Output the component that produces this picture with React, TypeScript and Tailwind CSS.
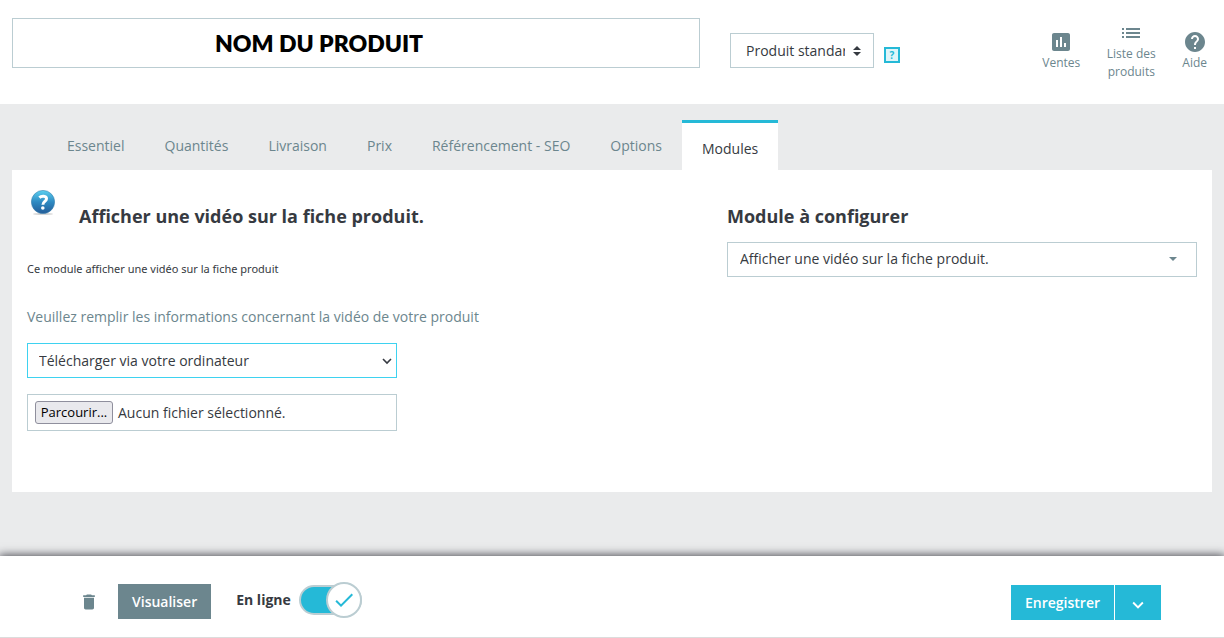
import { ReactNode, useState } from "react";
import {
  MdAssessment,
  MdCheck,
  MdDelete,
  MdHelp,
  MdKeyboardArrowDown,
  MdList,
} from "react-icons/md";

const tabs = [
  "Essentiel",
  "Quantités",
  "Livraison",
  "Prix",
  "Référencement - SEO",
  "Options",
  "Modules",
];

function HeaderLink({
  icon,
  className,
  children,
}: {
  icon: ReactNode;
  className?: string;
  children: ReactNode;
}) {
  return (
    <a
      href="#"
      className={`flex flex-col items-center text-center text-xs leading-[18px] text-[#6c868e] ${className ?? ""}`}
    >
      {icon}
      {children}
    </a>
  );
}

function HelpBall() {
  return (
    <svg width="26" height="26" viewBox="0 0 26 26" className="shrink-0" aria-hidden="true">
      <defs>
        <linearGradient id="ball" x1="0" y1="0" x2="0" y2="1">
          <stop offset="0" stopColor="#5ad0f0" />
          <stop offset="0.5" stopColor="#2f8ac2" />
          <stop offset="1" stopColor="#245c98" />
        </linearGradient>
      </defs>
      <ellipse cx="12" cy="24" rx="10" ry="1" fill="#d5d5d5" />
      <circle cx="12" cy="12" r="11.6" fill="url(#ball)" stroke="#3a82ae" strokeWidth="0.6" />
      <path
        d="M8.4 7.6 C10.2 5.8 15.6 5.6 15.5 8.8 C15.4 11.5 11.8 11.3 11.9 14.8"
        fill="none"
        stroke="#fff"
        strokeWidth="3"
      />
      <circle cx="11.8" cy="18" r="1.8" fill="#fff" />
    </svg>
  );
}

function Header() {
  return (
    <header className="flex h-[104px] bg-white pl-3">
      <div className="min-w-0 flex-1 pt-[18px]">
        <input
          type="text"
          aria-label="Nom du produit"
          defaultValue="NOM DU PRODUIT"
          className="h-[50px] w-full border border-[#bbcdd2] pl-[202px] font-[Lato,sans-serif] text-[23px] font-extrabold text-black outline-none"
        />
      </div>
      <div className="flex w-[524px] shrink-0 items-start pl-[30px]">
        <div className="relative mt-[33px] w-36">
          <select
            aria-label="Type de produit"
            className="h-[35px] w-full appearance-none border border-[#bbcdd2] bg-white pr-7 pl-[15px] text-sm outline-none"
          >
            <option>Produit standard</option>
            <option>Pack de produits</option>
            <option>Produit dématérialisé</option>
          </select>
          <svg
            width="8"
            height="10"
            viewBox="0 0 8 10"
            className="pointer-events-none absolute top-[13px] right-[13px]"
            aria-hidden="true"
          >
            <path d="M4 0 L8 4 H0 Z M0 6 H8 L4 10 Z" fill="#363a41" />
          </svg>
        </div>
        <button
          type="button"
          className="mt-[47px] ml-2.5 flex size-4 items-center justify-center border-2 border-[#25b9d7] bg-[#dff5f9] text-[10px] leading-none font-bold text-[#25b9d7]"
        >
          ?
        </button>
        <nav className="mt-[21px] mr-[17px] ml-auto flex items-center gap-[26px]">
          <HeaderLink icon={<MdAssessment size={24} />}>Ventes</HeaderLink>
          <HeaderLink icon={<MdList size={24} />} className="w-[50px]">
            Liste des produits
          </HeaderLink>
          <HeaderLink icon={<MdHelp size={24} />}>Aide</HeaderLink>
        </nav>
      </div>
    </header>
  );
}

function VideoForm() {
  const [fileName, setFileName] = useState("Aucun fichier sélectionné.");

  return (
    <section className="col-span-7 px-[15px]">
      <div className="flex items-start pt-5 pl-1">
        <HelpBall />
        <h2 className="mt-3.5 ml-[22px] text-lg leading-6 font-bold">
          Afficher une vidéo sur la fiche produit.
        </h2>
      </div>
      <p className="mt-[33px] font-['Noto_Sans',sans-serif] text-[11px] leading-4">
        Ce module afficher une vidéo sur la fiche produit
      </p>
      <label htmlFor="source" className="mt-[30px] block text-sm text-[#6c868e]">
        Veuillez remplir les informations concernant la vidéo de votre produit
      </label>
      <div className="relative mt-4 max-w-[370px]">
        <select
          id="source"
          className="h-[35px] w-full appearance-none border border-[#3ed2f0] bg-white px-[11px] text-sm outline-none"
        >
          <option>Télécharger via votre ordinateur</option>
          <option>Lien YouTube</option>
        </select>
        <svg
          width="10"
          height="7"
          viewBox="0 0 10 7"
          className="pointer-events-none absolute top-[15px] right-[5px]"
          aria-hidden="true"
        >
          <path d="M1 1 L5 5 L9 1" fill="none" stroke="#363a41" strokeWidth="1.6" />
        </svg>
      </div>
      <label className="relative mt-4 flex h-[37px] max-w-[370px] items-center border border-[#bbcdd2] px-[7px] text-sm">
        <input
          type="file"
          className="sr-only"
          onChange={(e) => {
            setFileName(e.target.files?.[0]?.name ?? "Aucun fichier sélectionné.");
          }}
        />
        <span className="flex h-[23px] w-[78px] items-center justify-center rounded-[3px] border border-[#8f8f9d] bg-[#e9e9ed] text-[13px] text-black">
          Parcourir...
        </span>
        <span className="ml-[5px]">{fileName}</span>
      </label>
    </section>
  );
}

function ModulePicker() {
  return (
    <section className="col-span-5 px-[15px] pt-[34px]">
      <h2 className="text-lg leading-6 font-bold">
        <label htmlFor="module">Module à configurer</label>
      </h2>
      <div className="relative mt-3.5">
        <select
          id="module"
          className="h-[35px] w-full appearance-none border border-[#bbcdd2] bg-white px-3 pb-px text-sm outline-none"
        >
          <option>Afficher une vidéo sur la fiche produit.</option>
        </select>
        <svg
          width="8"
          height="4"
          viewBox="0 0 8 4"
          className="pointer-events-none absolute top-[15px] right-5"
          aria-hidden="true"
        >
          <path d="M0 0 H8 L4 4 Z" fill="#6c868e" />
        </svg>
      </div>
    </section>
  );
}

function Footer() {
  const [online, setOnline] = useState(true);

  return (
    <footer className="relative flex items-start border-b border-[#dcdcdc] bg-white pt-7 pr-[63px] pb-[17px] pl-[79px] text-sm font-semibold shadow-[0_0_9px_1px_#4a4a52]">
      <button type="button" aria-label="Supprimer" className="flex h-[35px] items-center text-[#6c868e]">
        <MdDelete size={20} />
      </button>
      <button type="button" className="ml-[19px] h-[35px] bg-[#6c868e] px-3.5 text-white">
        Visualiser
      </button>
      <label className="ml-[25px] flex h-8 items-center font-bold">
        En ligne
        <input
          type="checkbox"
          checked={online}
          onChange={() => {
            setOnline(!online);
          }}
          className="sr-only"
        />
        <span
          className={`ml-2 flex h-[30px] w-[63px] items-center rounded-full border-2 border-[#bbcdd2] ${online ? "justify-end bg-[#25b9d7]" : "bg-white"}`}
        >
          <span className="-mx-0.5 flex size-9 shrink-0 items-center justify-center rounded-full border-2 border-[#bbcdd2] bg-white text-[#25b9d7]">
            {online ? <MdCheck size={24} /> : null}
          </span>
        </span>
      </label>
      <div className="ml-auto flex h-9 items-end gap-px text-white">
        <button type="button" className="h-[35px] bg-[#25b9d7] px-3.5">
          Enregistrer
        </button>
        <button
          type="button"
          aria-label="Plus d'actions"
          className="flex h-[35px] w-[46px] items-center justify-center bg-[#25b9d7] pt-1"
        >
          <MdKeyboardArrowDown size={22} />
        </button>
      </div>
    </footer>
  );
}

export default function App() {
  const [activeTab, setActiveTab] = useState("Modules");

  return (
    <div className="flex min-h-screen flex-col overflow-hidden bg-[#eaebec] font-['Open_Sans',sans-serif] text-[#363a41]">
      <Header />
      <main className="px-3 pt-4 pb-16">
        <div role="tablist" className="flex items-start pl-[35px]">
          {tabs.map((tab) => (
            <button
              type="button"
              role="tab"
              aria-selected={tab == activeTab}
              key={tab}
              onClick={() => {
                setActiveTab(tab);
              }}
              className={`px-5 pt-4 text-sm ${
                tab == activeTab
                  ? "border-t-3 border-[#25b9d7] bg-white pb-[11px]"
                  : "pb-3.5 text-[#6c868e]"
              }`}
            >
              {tab}
            </button>
          ))}
        </div>
        <div className="grid grid-cols-12 bg-white pb-[61px]">
          <VideoForm />
          <ModulePicker />
        </div>
      </main>
      <div className="mt-auto">
        <Footer />
      </div>
    </div>
  );
}
